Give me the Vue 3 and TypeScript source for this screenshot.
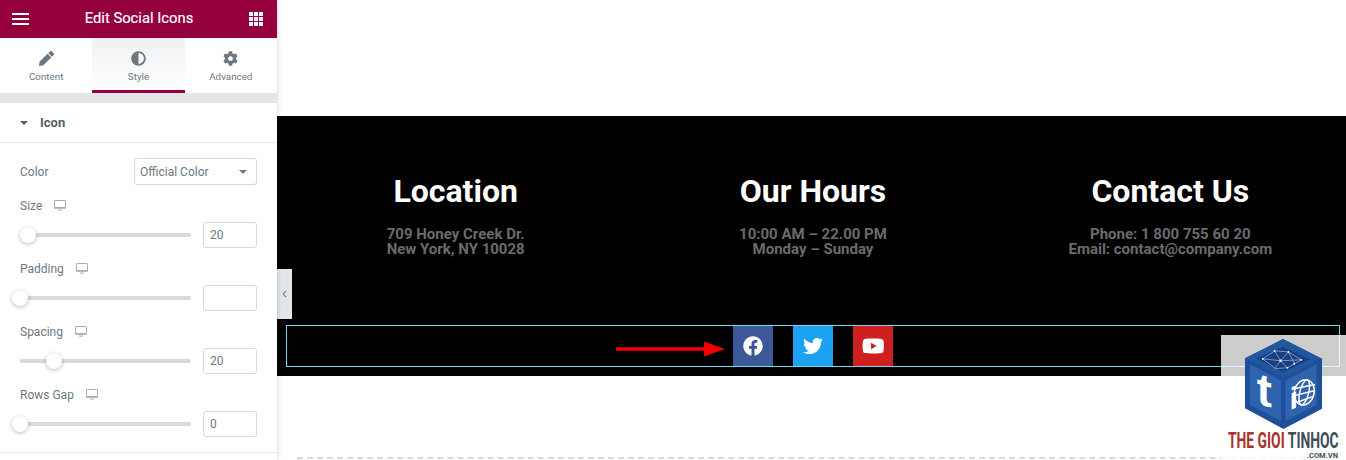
<script setup lang="ts">
interface Control {
  label: string;
  value: string;
  thumb: number;
}

const tabs = [
  {
    label: 'Content',
    box: '0 0 512 512',
    path: 'M497.9 142.1l-46.1 46.1c-4.7 4.7-12.3 4.7-17 0l-111-111c-4.7-4.7-4.7-12.3 0-17l46.1-46.1c18.7-18.7 49.1-18.7 67.9 0l60.1 60.1c18.8 18.7 18.8 49.1 0 67.9zM284.2 99.8L21.6 362.4.4 483.9c-2.9 16.4 11.4 30.6 27.8 27.8l121.5-21.3 262.6-262.6c4.7-4.7 4.7-12.3 0-17l-111-111c-4.8-4.7-12.4-4.7-17.1 0z',
  },
  {
    label: 'Style',
    box: '0 0 512 512',
    path: 'M8 256c0 136.966 111.033 248 248 248s248-111.034 248-248S392.966 8 256 8 8 119.033 8 256zm248 184V72c101.705 0 184 82.311 184 184 0 101.705-82.311 184-184 184z',
  },
  {
    label: 'Advanced',
    box: '0 0 512 512',
    path: 'M487.4 315.7l-42.6-24.6c4.3-23.2 4.3-47 0-70.2l42.6-24.6c4.9-2.8 7.1-8.6 5.5-14-11.1-35.6-30-67.8-54.7-94.6-3.8-4.1-10-5.1-14.8-2.3L380.8 110c-17.9-15.4-38.5-27.3-60.8-35.1V25.8c0-5.6-3.9-10.5-9.4-11.7-36.7-8.2-74.3-7.8-109.2 0-5.5 1.2-9.4 6.1-9.4 11.7V75c-22.2 7.9-42.8 19.8-60.8 35.1L88.7 85.5c-4.9-2.8-11-1.9-14.8 2.3-24.7 26.7-43.6 58.9-54.7 94.6-1.7 5.4.6 11.2 5.5 14L67.3 221c-4.3 23.2-4.3 47 0 70.2l-42.6 24.6c-4.9 2.8-7.1 8.6-5.5 14 11.1 35.6 30 67.8 54.7 94.6 3.8 4.1 10 5.1 14.8 2.3l42.6-24.6c17.9 15.4 38.5 27.3 60.8 35.1v49.2c0 5.6 3.9 10.5 9.4 11.7 36.7 8.2 74.3 7.8 109.2 0 5.5-1.2 9.4-6.1 9.4-11.7v-49.2c22.2-7.9 42.8-19.8 60.8-35.1l42.6 24.6c4.9 2.8 11 1.9 14.8-2.3 24.7-26.7 43.6-58.9 54.7-94.6 1.5-5.5-.7-11.3-5.6-14.1zM256 336c-44.1 0-80-35.9-80-80s35.9-80 80-80 80 35.9 80 80-35.9 80-80 80z',
  },
];

const controls: Control[] = [
  { label: 'Size', value: '20', thumb: 8 },
  { label: 'Padding', value: '', thumb: 0 },
  { label: 'Spacing', value: '20', thumb: 34 },
  { label: 'Rows Gap', value: '0', thumb: 0 },
];

const columns = [
  { title: 'Location', lines: ['709 Honey Creek Dr.', 'New York, NY 10028'] },
  { title: 'Our Hours', lines: ['10:00 AM – 22.00 PM', 'Monday – Sunday'] },
  { title: 'Contact Us', lines: ['Phone: 1 800 755 60 20', 'Email: contact@company.com'] },
];

const socials = [
  {
    name: 'facebook',
    box: '0 0 512 512',
    path: 'M504 256C504 119 393 8 256 8S8 119 8 256c0 123.78 90.69 226.38 209.25 245V327.69h-63V256h63v-54.64c0-62.15 37-96.48 93.67-96.48 27.14 0 55.52 4.84 55.52 4.84v61h-31.28c-30.8 0-40.41 19.12-40.41 38.73V256h68.78l-11 71.69h-57.78V501C413.31 482.38 504 379.78 504 256z',
  },
  {
    name: 'twitter',
    box: '0 0 512 512',
    path: 'M459.37 151.716c.325 4.548.325 9.097.325 13.645 0 138.72-105.583 298.558-298.558 298.558-59.452 0-114.68-17.219-161.137-47.106 8.447.974 16.568 1.299 25.34 1.299 49.055 0 94.213-16.568 130.274-44.832-46.132-.975-84.792-31.188-98.112-72.772 6.498.974 12.995 1.624 19.818 1.624 9.421 0 18.843-1.3 27.614-3.573-48.081-9.747-84.143-51.98-84.143-102.985v-1.299c13.969 7.797 30.214 12.67 47.431 13.319-28.264-18.843-46.781-51.005-46.781-87.391 0-19.492 5.197-37.36 14.294-52.954 51.655 63.675 129.3 105.258 216.365 109.807-1.624-7.797-2.599-15.918-2.599-24.04 0-57.828 46.782-104.934 104.934-104.934 30.213 0 57.502 12.67 76.67 33.137 23.715-4.548 46.456-13.32 66.599-25.34-7.798 24.366-24.366 44.833-46.132 57.827 21.117-2.273 41.584-8.122 60.426-16.243-14.292 20.791-32.161 39.308-52.628 54.253z',
  },
  {
    name: 'youtube',
    box: '0 0 576 512',
    path: 'M549.655 124.083c-6.281-23.65-24.787-42.276-48.284-48.597C458.781 64 288 64 288 64S117.22 64 74.629 75.486c-23.497 6.322-42.003 24.947-48.284 48.597-11.412 42.867-11.412 132.305-11.412 132.305s0 89.438 11.412 132.305c6.281 23.65 24.787 41.5 48.284 47.821C117.22 448 288 448 288 448s170.78 0 213.371-11.486c23.497-6.321 42.003-24.171 48.284-47.821 11.412-42.867 11.412-132.305 11.412-132.305s0-89.438-11.412-132.305zm-317.51 213.508V175.185l142.739 81.205-142.739 81.201z',
  },
];
</script>

<template>
  <div class="page">
    <aside class="panel">
      <header class="panel-head">
        <span class="burger"><i></i><i></i><i></i></span>
        <h1>Edit Social Icons</h1>
        <span class="apps"><i v-for="n in 9" :key="n"></i></span>
      </header>

      <nav class="tabs">
        <div v-for="t in tabs" :key="t.label" class="tab" :class="{ active: t.label === 'Style' }">
          <svg :viewBox="t.box" class="tab-icon"><path :d="t.path" /></svg>
          <span>{{ t.label }}</span>
        </div>
      </nav>
      <div class="band"></div>

      <div class="section-title">
        <span class="caret"></span>
        <span>Icon</span>
      </div>

      <div class="controls">
        <div class="color-row">
          <label>Color</label>
          <div class="select">Official Color<span class="caret small"></span></div>
        </div>
        <div v-for="c in controls" :key="c.label" class="control">
          <div class="control-label">
            <label>{{ c.label }}</label>
            <svg viewBox="0 0 12 11" class="monitor">
              <rect x="0.5" y="0.5" width="11" height="7.5" rx="0.6" fill="none" stroke="currentColor" />
              <rect x="0" y="7" width="12" height="1.6" fill="currentColor" />
              <rect x="4" y="9.6" width="4" height="1" fill="currentColor" />
            </svg>
          </div>
          <div class="control-input">
            <div class="track">
              <span class="thumb" :style="{ left: c.thumb + 'px' }"></span>
            </div>
            <div class="num">{{ c.value }}</div>
          </div>
        </div>
      </div>
    </aside>

    <main class="canvas">
      <div class="blank"></div>
      <section class="footer">
        <div class="cols">
          <div v-for="col in columns" :key="col.title" class="col">
            <h2>{{ col.title }}</h2>
            <p v-for="line in col.lines" :key="line">{{ line }}</p>
          </div>
        </div>
        <div class="social-row">
          <a v-for="s in socials" :key="s.name" class="social" :class="s.name">
            <svg :viewBox="s.box"><path :d="s.path" /></svg>
          </a>
        </div>
      </section>
      <div class="dropzone"></div>

      <button class="collapse" type="button" aria-label="Collapse">
        <svg viewBox="0 0 6 10"><path d="M5 1 1.4 5 5 9" fill="none" stroke="currentColor" stroke-width="1.4" /></svg>
      </button>

      <svg class="arrow" viewBox="0 0 110 16">
        <path d="M1.5 8H90" stroke="#f00000" stroke-width="3.4" stroke-linecap="round" />
        <path d="M88 0.5 109 8 88 15.5z" fill="#f00000" />
      </svg>
    </main>

    <div class="watermark">
      <svg class="cube" viewBox="0 0 80 92">
        <path d="M39.5 1 79 21v50.5L40 92 1 71V20.5z" fill="#1f4f99" />
        <path d="M39.5 1 79 21 39.5 40 1 20.5z" fill="#22579f" />
        <path d="M39.5 9 67 21.5 39.5 34.5 12 20.5z" fill="#174082" />
        <path d="M6 26.5 37.5 43v41L6 67.5z" fill="#2f63ad" />
        <path d="M73.5 26.5 42 43v41l31.5-16.5z" fill="#2f63ad" />
        <g stroke="#b9cbe4" stroke-width="0.6" fill="none">
          <path d="M19 21 31 13l14 1 13 8-14 8-12 1zM31 13l6 10 8-9M19 21l18 2 7 7M37 23l-6 8M37 23l21-1M45 14l6 12" />
        </g>
        <g fill="#fff">
          <circle cx="31" cy="13" r="0.9" /><circle cx="45" cy="14" r="0.9" /><circle cx="37" cy="23" r="1.2" />
          <circle cx="58" cy="22" r="0.9" /><circle cx="44" cy="30" r="0.9" /><circle cx="19" cy="21" r="0.9" />
          <circle cx="51" cy="26" r="0.9" />
        </g>
        <text x="0" y="0" transform="matrix(1 .3 0 1 13 66)" class="cube-t">t</text>
        <g transform="translate(61 55)" fill="none" stroke="#fff" stroke-width="1.5">
          <ellipse cx="0" cy="0" rx="10" ry="13" transform="rotate(14)" />
          <ellipse cx="0" cy="0" rx="4.5" ry="13" transform="rotate(14)" />
          <path d="M-9-4 11-8M-9 3l20-5M-7 10 9 4" />
        </g>
        <text x="0" y="0" transform="matrix(1 -.4 0 1 46 73)" class="cube-i">i</text>
      </svg>
      <div class="brand"><b>THE GIOI</b> <span>TINHOC</span></div>
      <div class="brand-sub">.COM.VN</div>
    </div>
  </div>
</template>

<style>
html,
body {
  margin: 0;
  background: #fff;
}
</style>

<style scoped>
.page {
  position: relative;
  display: flex;
  width: 1346px;
  height: 460px;
  overflow: hidden;
  font-family: Roboto, "Liberation Sans", sans-serif;
  background: #fff;
}

.panel {
  flex: 0 0 277px;
  position: relative;
  z-index: 2;
  background: #fff;
  box-shadow: 1px 0 4px rgba(0, 0, 0, 0.14);
  color: #6d7882;
}

.panel-head {
  height: 38px;
  padding: 0 14px 0 12px;
  display: flex;
  align-items: center;
  justify-content: space-between;
  background: #93003c;
  color: #fff;
  box-sizing: border-box;
}

.panel-head h1 {
  margin: 0 0 2px;
  font-size: 14.8px;
  font-weight: 400;
  -webkit-text-stroke: 0.15px #fff;
}

.burger {
  width: 17px;
  display: flex;
  flex-direction: column;
  gap: 2.5px;
}

.burger i {
  height: 2.5px;
  background: #fff;
}

.apps {
  width: 14px;
  display: grid;
  grid-template-columns: repeat(3, 3.6px);
  gap: 1.6px;
}

.apps i {
  height: 3.6px;
  background: #fff;
}

.tabs {
  display: flex;
  height: 55px;
}

.tab {
  flex: 1;
  display: flex;
  flex-direction: column;
  align-items: center;
  padding-top: 13px;
  box-sizing: border-box;
  font-size: 9.8px;
  color: #6d7882;
}

.tab span {
  margin-top: 5px;
  line-height: 12px;
}

.tab-icon {
  width: 15px;
  height: 15px;
  fill: #6d7882;
}

.tab.active {
  background: linear-gradient(#eef0f2, #fff);
  border-bottom: 3px solid #93003c;
}

.band {
  height: 10px;
  background: #e3e6e9;
}

.section-title {
  height: 39px;
  padding-left: 20px;
  display: flex;
  align-items: center;
  gap: 12px;
  font-size: 13px;
  font-weight: 700;
  color: #556068;
  border-bottom: 1px solid #e6e9ec;
}

.caret {
  width: 0;
  height: 0;
  border-left: 4px solid transparent;
  border-right: 4px solid transparent;
  border-top: 4px solid #556068;
}

.controls {
  padding: 15px 20px;
  border-bottom: 1px solid #e6e9ec;
  height: 310px;
  box-sizing: border-box;
  font-size: 12px;
}

.color-row {
  height: 27px;
  display: flex;
  align-items: center;
  justify-content: space-between;
}

.select {
  width: 123px;
  height: 27px;
  padding: 0 9px 0 5px;
  display: flex;
  align-items: center;
  justify-content: space-between;
  box-sizing: border-box;
  border: 1px solid #d5dadf;
  border-radius: 3px;
}

.caret.small {
  border-top-color: #6d7882;
}

.control {
  height: 63px;
}

.control-label {
  height: 37px;
  padding-top: 4px;
  box-sizing: border-box;
  display: flex;
  align-items: center;
  gap: 12px;
}

.monitor {
  width: 12px;
  height: 11px;
  color: #a4afb7;
}

.control-input {
  display: flex;
  align-items: center;
  justify-content: space-between;
  height: 26px;
}

.track {
  position: relative;
  width: 171px;
  height: 4px;
  border-radius: 2px;
  background: #d5dadf;
}

.thumb {
  position: absolute;
  top: -6px;
  width: 16px;
  height: 16px;
  margin-left: -8px;
  border-radius: 50%;
  background: #fff;
  box-shadow: 0 1px 4px rgba(0, 0, 0, 0.28);
}

.num {
  width: 54px;
  height: 26px;
  padding-left: 6px;
  box-sizing: border-box;
  line-height: 24px;
  border: 1px solid #d5dadf;
  border-radius: 3px;
}

.canvas {
  flex: 1;
  position: relative;
  min-width: 0;
}

.blank {
  height: 116px;
}

.footer {
  height: 260px;
  background: #000;
  padding: 55px 0 0;
  box-sizing: border-box;
}

.cols {
  display: grid;
  grid-template-columns: repeat(3, 357.33px);
  height: 154px;
}

.col {
  text-align: center;
  color: #6b6b6b;
  font-size: 15px;
  font-weight: 700;
  line-height: 15px;
}

.col h2 {
  margin: 0 0 16px;
  color: #fff;
  font-size: 32px;
  font-weight: 700;
  line-height: 40px;
}

.col p {
  margin: 0;
}

.social-row {
  width: 1054px;
  height: 42px;
  margin-left: 9px;
  box-sizing: border-box;
  border: 1px solid #71d7f7;
  display: flex;
  justify-content: center;
  gap: 20px;
}

.social {
  width: 40px;
  height: 40px;
  display: flex;
  align-items: center;
  justify-content: center;
}

.social svg {
  width: 20px;
  height: 20px;
  fill: #fff;
}

.social.youtube svg {
  width: 22.5px;
}

.facebook {
  background: #3b5998;
}

.twitter {
  background: #1da1f2;
}

.youtube {
  background: #cd201f;
}

.dropzone {
  margin: 81px 20px 0;
  height: 40px;
  border: 2px dashed #d5dadf;
  box-sizing: border-box;
}

.collapse {
  position: absolute;
  left: 0;
  top: 269px;
  width: 15px;
  height: 50px;
  padding: 0;
  border: 0;
  background: #e3e6e9;
  color: #6d7882;
  display: flex;
  align-items: center;
  justify-content: center;
}

.collapse svg {
  width: 5px;
  height: 8px;
}

.arrow {
  position: absolute;
  left: 339px;
  top: 341px;
  width: 110px;
  height: 16px;
}

.watermark {
  position: absolute;
  left: 1221px;
  top: 335px;
  z-index: 3;
  width: 125px;
  height: 125px;
  background: rgba(255, 255, 255, 0.8);
}

.cube {
  position: absolute;
  left: 23px;
  top: 3px;
  width: 79px;
  height: 91px;
}

.cube-t {
  font: 700 46px "Liberation Sans", sans-serif;
  fill: #fff;
}

.cube-i {
  font: 700 31px "Liberation Sans", sans-serif;
  fill: #fff;
}

.brand {
  position: absolute;
  left: 7px;
  top: 97px;
  width: 170px;
  font-size: 22px;
  line-height: 18px;
  font-weight: 700;
  white-space: nowrap;
  color: #a8322f;
  transform: scaleX(0.63);
  transform-origin: left center;
}

.brand b {
  font-weight: 700;
}

.brand span {
  color: #3f4d57;
}

.brand-sub {
  position: absolute;
  right: 8px;
  top: 117px;
  font-size: 7.5px;
  line-height: 8px;
  font-weight: 700;
  color: #3f4d57;
}
</style>
